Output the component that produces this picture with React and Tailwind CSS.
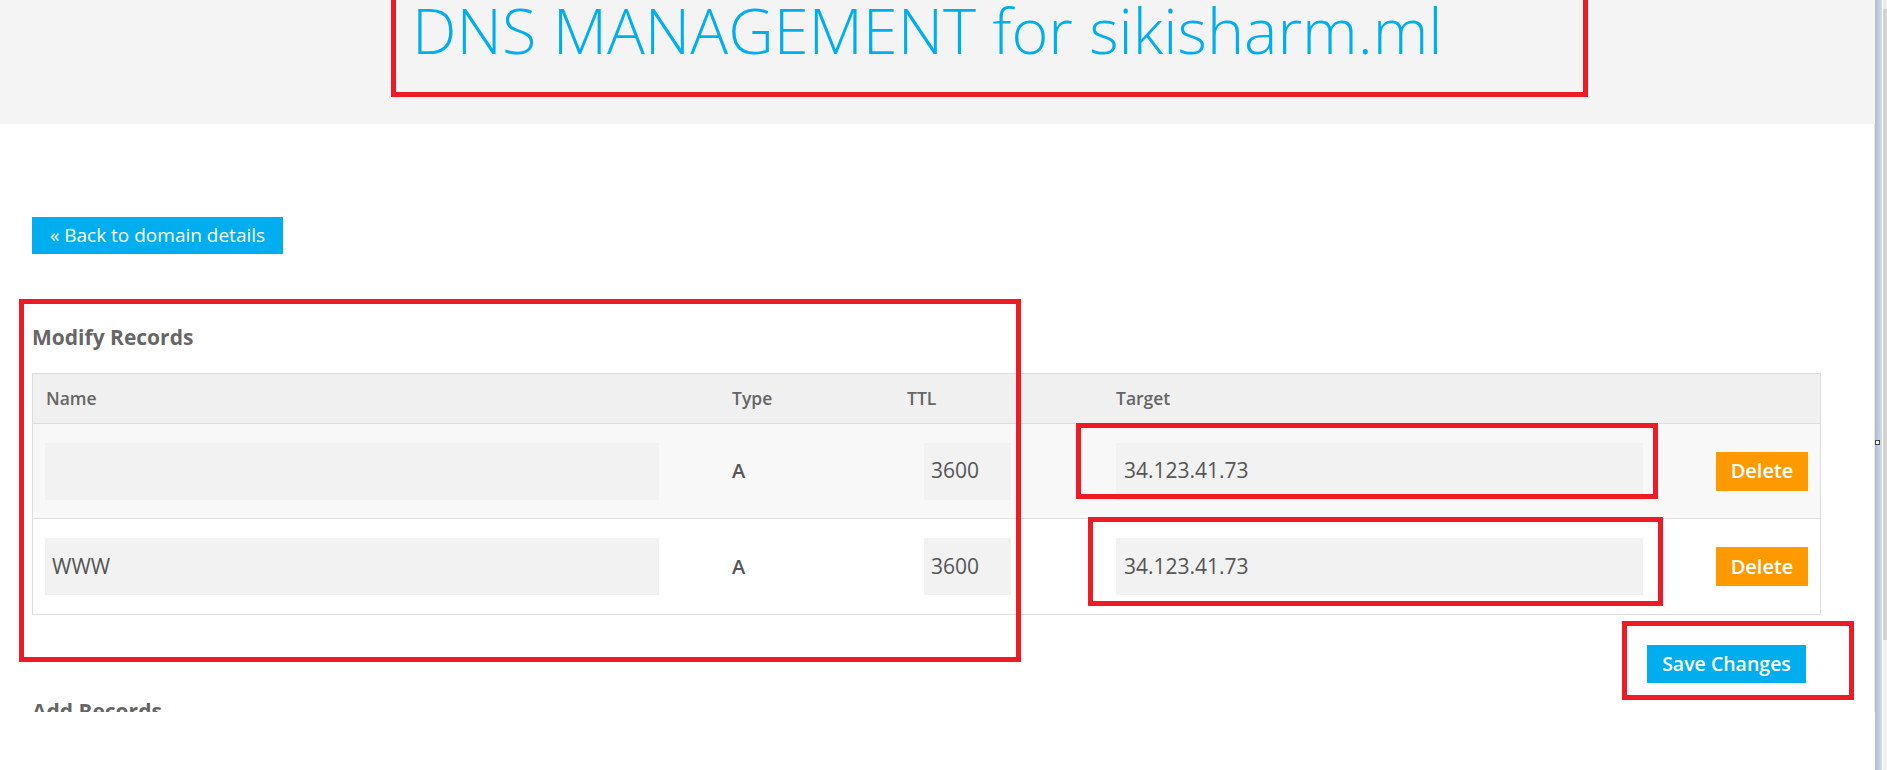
const records = [
  { name: '', type: 'A', ttl: '3600', target: '34.123.41.73', rowBg: 'bg-[#f8f8f8]' },
  { name: 'WWW', type: 'A', ttl: '3600', target: '34.123.41.73', rowBg: 'bg-white' },
];

function RecordRow({ rec }) {
  return (
    <div className={`flex h-[95px] items-center border-b border-[#ddd] last:border-b-0 ${rec.rowBg}`}>
      <div className="w-[687px] pl-[12px]">
        <div className="flex h-[57px] w-[614px] items-center bg-[#f2f2f2] px-[7px] text-[21px] text-[#555]">
          {rec.name}
        </div>
      </div>
      <div className="w-[175px] pl-[12px] text-[20px] font-semibold text-[#555]">{rec.type}</div>
      <div className="w-[209px] pl-[29px]">
        <div className="flex h-[57px] w-[87px] items-center bg-[#f2f2f2] px-[7px] text-[21px] text-[#555]">
          {rec.ttl}
        </div>
      </div>
      <div className="w-[586px] pl-[12px]">
        <div className="flex h-[57px] w-[527px] items-center bg-[#f2f2f2] px-[8px] text-[21px] text-[#555]">
          {rec.target}
        </div>
      </div>
      <div className="flex-1 pl-[26px]">
        <button className="flex h-[39px] w-[92px] items-center justify-center bg-[#ff9900] text-[20px] font-semibold text-white">
          Delete
        </button>
      </div>
    </div>
  );
}

export default function App() {
  return (
    <div className="flex h-[770px] w-[1887px] overflow-hidden bg-white font-['Open_Sans',sans-serif]">
      <div className="relative h-[712px] w-[1875px] overflow-hidden">
        <div className="h-[124px] bg-[#f4f4f4] pl-[412px]">
          <h1 className="text-[63px] font-light leading-[60px] text-[#00aeef]">
            DNS MANAGEMENT for sikisharm.ml
          </h1>
        </div>

        <div className="h-[588px] border-r border-[#e6e6e6] px-[32px] pt-[93px]">
          <button className="flex h-[37px] w-[251px] items-center justify-center whitespace-nowrap bg-[#00aeef] text-[19px] text-white">
            « Back to domain details
          </button>

          <h2 className="mt-[69px] text-[21px] font-bold leading-[28px] text-[#666]">Modify Records</h2>

          <div className="mt-[22px] w-[1789px] border border-[#ddd]">
            <div className="flex h-[50px] items-center border-b border-[#ddd] bg-[#f0f0f0] text-[17.5px] font-semibold text-[#666]">
              <div className="w-[687px] pl-[13px]">Name</div>
              <div className="w-[175px] pl-[12px]">Type</div>
              <div className="w-[209px] pl-[12px]">TTL</div>
              <div className="w-[586px] pl-[12px]">Target</div>
              <div className="flex-1" />
            </div>
            {records.map((rec, i) => (
              <RecordRow key={i} rec={rec} />
            ))}
          </div>

          <div className="mt-[30px] flex w-[1789px] justify-end pr-[15px]">
            <button className="flex h-[38px] w-[159px] items-center justify-center bg-[#00aeef] text-[19.5px] font-semibold text-white">
              Save Changes
            </button>
          </div>

          <h2 className="mt-[14px] text-[21px] font-bold leading-[28px] text-[#666]">Add Records</h2>
        </div>

        {/* red annotation boxes */}
        <div className="absolute left-[391px] top-[-10px] h-[107px] w-[1197px] border-[5px] border-[#ed1c24]" />
        <div className="absolute left-[19px] top-[299px] h-[363px] w-[1002px] border-[5px] border-[#ed1c24]" />
        <div className="absolute left-[1076px] top-[423px] h-[76px] w-[582px] border-[5px] border-[#ed1c24]" />
        <div className="absolute left-[1088px] top-[517px] h-[89px] w-[575px] border-[5px] border-[#ed1c24]" />
        <div className="absolute left-[1622px] top-[621px] h-[79px] w-[232px] border-[5px] border-[#ed1c24]" />
      </div>

      {/* window scrollbar */}
      <div className="relative flex h-[770px] w-[12px]">
        <div className="w-[7px] bg-gradient-to-r from-[#aebdd2] to-[#d3dce9]" />
        <div className="w-[1px] bg-white" />
        <div className="flex w-[4px] flex-col">
          <div className="h-[9px] bg-[#ececec]" />
          <div className="h-[631px] bg-[#d2d2d2]" />
          <div className="flex-1 bg-[#f0f0f0]" />
        </div>
        <div className="absolute left-0 top-[440px] h-[5px] w-[5px] border border-[#444] bg-white" />
      </div>
    </div>
  );
}
